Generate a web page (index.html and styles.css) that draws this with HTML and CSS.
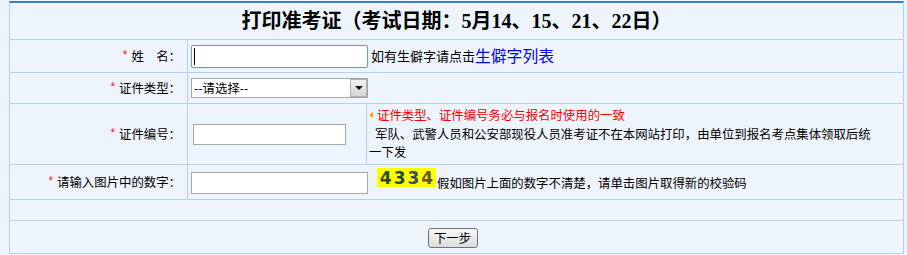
FILE: index.html
```html
<!DOCTYPE html>
<html lang="zh-CN">
<head>
<meta charset="utf-8">
<title>打印准考证</title>
<link rel="stylesheet" href="styles.css">
</head>
<body>
<form class="panel" action="#">
  <div class="row row-head">
    <h1 class="title">打印准考证（考试日期：5月14、15、21、22日）</h1>
  </div>

  <div class="row row-name">
    <div class="label"><span class="req">*</span>姓　名：</div>
    <div class="field">
      <span class="focus-wrap"><input class="inp inp-name" type="text"><span class="caret"></span></span>
      <span class="hint">如有生僻字请点击</span><a class="link" href="#">生僻字列表</a>
    </div>
  </div>

  <div class="row row-type">
    <div class="label"><span class="req">*</span>证件类型：</div>
    <div class="field">
      <span class="select-wrap">
        <select class="sel"><option>--请选择--</option></select>
        <span class="sel-btn"><span class="sel-arrow"></span></span>
      </span>
    </div>
  </div>

  <div class="row row-id">
    <div class="label"><span class="req">*</span>证件编号：</div>
    <div class="field field-id"><input class="inp inp-id" type="text"></div>
    <div class="msg">
      <p class="msg-warn"><span class="tri"></span>证件类型、证件编号务必与报名时使用的一致</p>
      <p class="msg-note">军队、武警人员和公安部现役人员准考证不在本网站打印，由单位到报名考点集体领取后统一下发</p>
    </div>
  </div>

  <div class="row row-code">
    <div class="label"><span class="req">*</span>请输入图片中的数字：</div>
    <div class="field field-code">
      <input class="inp inp-code" type="text">
      <span class="captcha"><span class="d1">4</span><span class="d2">3</span><span class="d3">3</span><span class="d4">4</span></span>
      <span class="code-hint">假如图片上面的数字不清楚，请单击图片取得新的校验码</span>
    </div>
  </div>

  <div class="row row-empty"></div>

  <div class="row row-btn">
    <button class="btn" type="button">下一步</button>
  </div>
</form>
</body>
</html>
```

FILE: styles.css
```css
* {
  box-sizing: border-box;
}

html,
body {
  margin: 0;
  padding: 0;
}

body {
  background: #eef4fc;
  font-family: "Noto Sans CJK SC", sans-serif;
  font-size: 12.4px;
  color: #000;
}

.panel {
  width: 895px;
  margin: 1px 0 0 9px;
  border-left: 1px solid #b5cff1;
  border-right: 1px solid #b5cff1;
  border-top: 2px solid #3c7ec5;
  background: #eef4fc;
}

.row {
  display: grid;
  grid-template-columns: 178px 1fr;
  border-bottom: 1px solid #b5cff1;
}

.row-head {
  display: flex;
  justify-content: center;
  align-items: center;
  height: 37px;
}

.title {
  margin: 0;
  font-family: "Liberation Serif", "Noto Sans CJK SC", serif;
  font-size: 20px;
  font-weight: bold;
  line-height: 36px;
}

.row-name { height: 33px; }
.row-type { height: 31px; }
.row-id {
  height: 61px;
  grid-template-columns: 178px 179px 1fr;
}
.row-code { height: 35px; }
.row-empty { height: 21px; display: block; }
.row-btn {
  height: 33px;
  display: flex;
  justify-content: center;
  align-items: center;
  padding-right: 8px;
}

.label {
  display: flex;
  justify-content: flex-end;
  align-items: center;
  padding-right: 6px;
  border-right: 1px solid #b5cff1;
  line-height: 16px;
  white-space: nowrap;
}

.req {
  color: #ff2020;
  font-family: "Liberation Sans", sans-serif;
  font-size: 12px;
  margin-right: 4px;
  position: relative;
  top: -1px;
}

.field {
  display: flex;
  align-items: center;
  padding-left: 3px;
  white-space: nowrap;
}

.inp {
  display: block;
  margin: 0;
  padding: 0 3px;
  background: #fff;
  border: 1px solid #a7a7a7;
  font: inherit;
  outline: none;
}

.focus-wrap {
  position: relative;
  display: block;
}

.inp-name {
  width: 177px;
  height: 23px;
  border: 1px solid #5b9ee0;
  border-radius: 2px;
  box-shadow: 0 0 1px #8cbcec;
}

.caret {
  position: absolute;
  left: 3px;
  top: 3px;
  width: 1px;
  height: 17px;
  background: #000;
}

.hint {
  margin-left: 3px;
  font-size: 13px;
  line-height: 16px;
}

.link {
  color: #0000ff;
  text-decoration: none;
  font-size: 15.8px;
  line-height: 18px;
}

.select-wrap {
  position: relative;
  display: block;
  width: 177px;
  height: 20px;
}

.sel {
  display: block;
  width: 177px;
  height: 20px;
  margin: 0;
  padding: 0 0 0 2px;
  border: 1px solid #a5a5a5;
  border-radius: 0;
  background: #fff;
  font: inherit;
  color: #000;
  -webkit-appearance: none;
  appearance: none;
  outline: none;
}

.sel-btn {
  position: absolute;
  right: 1px;
  top: 1px;
  width: 17px;
  height: 18px;
  border: 1px solid #b0b0b0;
  background: linear-gradient(#f2f2f2, #d6d6d6);
  display: flex;
  justify-content: center;
  align-items: center;
}

.sel-arrow {
  width: 0;
  height: 0;
  border-left: 4px solid transparent;
  border-right: 4px solid transparent;
  border-top: 4px solid #111;
}

.field-id {
  padding-left: 5px;
  border-right: 1px solid #b5cff1;
}

.inp-id {
  width: 153px;
  height: 21px;
}

.msg {
  padding: 2px 28px 0 2px;
  line-height: 18.5px;
}

.msg p {
  margin: 0;
}

.msg-warn {
  color: #ff0000;
  display: flex;
  align-items: center;
}

.tri {
  display: inline-block;
  width: 0;
  height: 0;
  border-top: 3px solid transparent;
  border-bottom: 3px solid transparent;
  border-right: 4px solid #ff9900;
  margin-right: 4px;
}

.msg-note {
  text-indent: 6px;
}

.field-code {
  align-items: flex-start;
}

.inp-code {
  width: 177px;
  height: 22px;
  margin-top: 7px;
}

.captcha {
  display: flex;
  justify-content: center;
  align-items: center;
  width: 59px;
  height: 19px;
  margin: 3px 1px 0 9px;
  background: #ffff00;
  font-family: "DejaVu Sans", sans-serif;
  font-weight: 600;
  font-size: 17px;
  letter-spacing: 2px;
  padding-left: 2px;
}

.d1 { color: #2d4c2c; }
.d2 { color: #234a4a; }
.d3 { color: #3d4b63; }
.d4 { color: #6b5424; }

.code-hint {
  margin-top: 10px;
  line-height: 16px;
}

.btn {
  width: 50px;
  height: 20px;
  margin: 1px 0 0 0;
  padding: 0;
  border: 1px solid #707070;
  border-radius: 3px;
  background: linear-gradient(#f6f6f6, #dddddd);
  font-family: "Noto Sans CJK SC", sans-serif;
  font-size: 12.4px;
  line-height: 16px;
  color: #000;
}
```
